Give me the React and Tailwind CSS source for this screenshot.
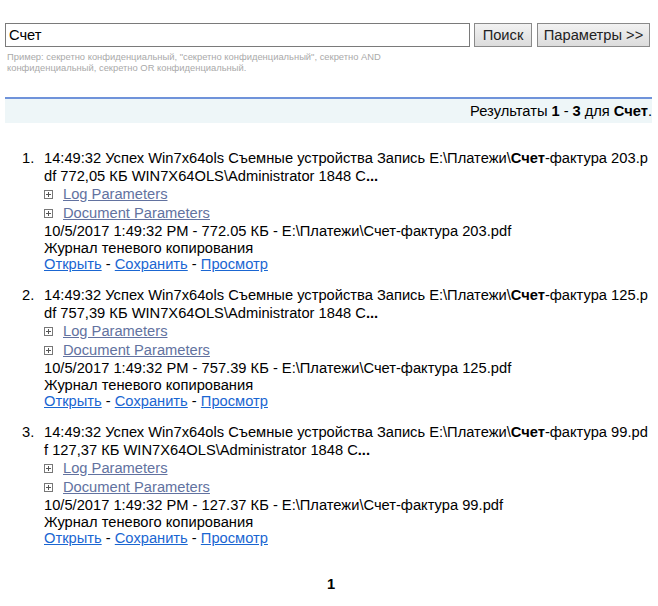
import React from 'react'

const items = [
  { n: 1, name: '203', size1: '772,05', size2: '772.05' },
  { n: 2, name: '125', size1: '757,39', size2: '757.39' },
  { n: 3, name: '99', size1: '127,37', size2: '127.37' },
]

function PlusBox() {
  return (
    <span className="inline-flex items-center justify-center w-[9px] h-[9px] border border-[#777] mr-[10px] shrink-0">
      <svg width="7" height="7" viewBox="0 0 7 7">
        <path d="M3.5 1v5M1 3.5h5" stroke="#555" strokeWidth="1" />
      </svg>
    </span>
  )
}

function Result({ item }) {
  return (
    <div className="flex pl-[17px] pr-[4px] mb-[13px]">
      <span className="w-[22px] shrink-0">{item.n}.</span>
      <div className="flex-1 min-w-0">
        <div className="break-all">
          14:49:32 Успех Win7x64ols Съемные устройства Запись E:\Платежи\<b>Счет</b>-фактура {item.name}.pdf {item.size1} КБ WIN7X64OLS\Administrator 1848 C<b>...</b>
        </div>
        <div className="flex items-center leading-[19px]">
          <PlusBox />
          <a href="#" className="text-[#6272a0] underline">Log Parameters</a>
        </div>
        <div className="flex items-center">
          <PlusBox />
          <a href="#" className="text-[#6272a0] underline">Document Parameters</a>
        </div>
        <div>10/5/2017 1:49:32 PM - {item.size2} КБ - E:\Платежи\Счет-фактура {item.name}.pdf</div>
        <div className="leading-[16px]">Журнал теневого копирования</div>
        <div className="leading-[17px]">
          <a href="#" className="text-[#1a66d2] underline">Открыть</a> -{' '}
          <a href="#" className="text-[#1a66d2] underline">Сохранить</a> -{' '}
          <a href="#" className="text-[#1a66d2] underline">Просмотр</a>
        </div>
      </div>
    </div>
  )
}

export default function App() {
  return (
    <div className="bg-white min-h-[606px] px-[5px] pt-[23px] text-[14.7px] text-black" style={{ fontFamily: '"Liberation Sans", Arial, sans-serif' }}>
      <div className="flex items-center">
        <input
          defaultValue="Счет"
          className="w-[465px] h-[24px] border border-[#7a7a7a] px-[3px] text-[14.7px] outline-none"
        />
        <button className="ml-[4px] w-[58px] h-[24px] border border-[#8a8a8a] bg-gradient-to-b from-[#f2f2f2] to-[#dcdcdc] text-[14.7px] text-[#222]">
          Поиск
        </button>
        <button className="ml-[5px] w-[113px] h-[24px] border border-[#8a8a8a] bg-gradient-to-b from-[#f2f2f2] to-[#dcdcdc] text-[14.7px] text-[#222]">
          Параметры &gt;&gt;
        </button>
      </div>
      <p className="mt-[4px] pl-[2px] max-w-[385px] text-[9.4px] leading-[11px] text-[#aaaaaa]">
        Пример: секретно конфиденциальный, "секретно конфиденциальный", секретно AND конфиденциальный, секретно OR конфиденциальный.
      </p>
      <div className="mt-[24px] mr-[1px] border-t-2 border-[#6f93da] bg-[#eef6f8] h-[26px] flex items-center justify-end">
        Результаты <b className="mx-[4px]">1</b> - <b className="mx-[4px]">3</b> для <b className="ml-[4px]">Счет</b>.
      </div>
      <div className="mt-[26px] leading-[18px]">
        {items.map(it => (
          <Result key={it.n} item={it} />
        ))}
      </div>
      <div className="mt-[26px] text-center font-bold pl-[4px]">1</div>
    </div>
  )
}
